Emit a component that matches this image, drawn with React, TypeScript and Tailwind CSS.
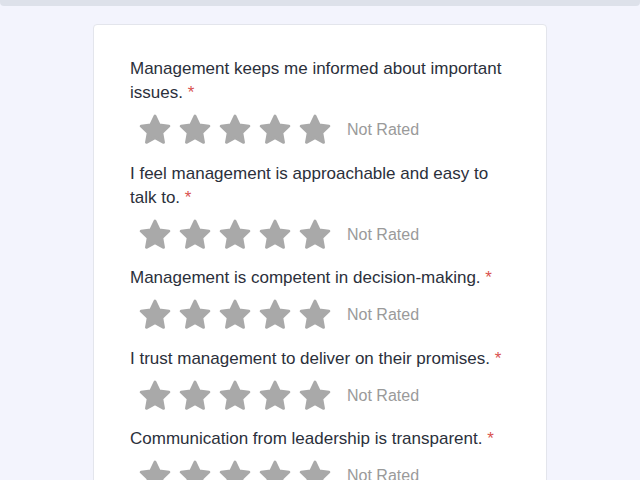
import React from "react";

interface Question {
  id:    string;
  label: string;
}

const QUESTIONS: Question[] = [
  { id: "informed",     label: "Management keeps me informed about important issues." },
  { id: "approachable", label: "I feel management is approachable and easy to talk to." },
  { id: "competent",    label: "Management is competent in decision-making." },
  { id: "trust",        label: "I trust management to deliver on their promises." },
  { id: "transparent",  label: "Communication from leadership is transparent." },
];

// Five-point star with softened corners
function Star() {
  return (
    <svg viewBox="0 0 24 24" className="w-9 h-9" aria-hidden>
      <path
        d="M12 2.6l2.85 5.9 6.45.9-4.7 4.5 1.15 6.4L12 17.2l-5.75 3.1 1.15-6.4-4.7-4.5 6.45-.9z"
        fill="#a9a9a9"
        stroke="#a9a9a9"
        strokeWidth="1.8"
        strokeLinejoin="round"
      />
    </svg>
  );
}

function RatingRow({ label }: { label: string }) {
  return (
    <div className="flex flex-col">
      <p className="text-[17px] leading-6 text-[#2b303b]">
        {label} <span className="text-[#d9534f]">*</span>
      </p>
      <div className="flex items-center mt-[7px] pl-[7px] h-9">
        <div className="flex gap-1">
          {[1, 2, 3, 4, 5].map((n) => (
            <button key={n} aria-label={`${n} star`} className="w-9 h-9 flex items-center justify-center">
              <Star />
            </button>
          ))}
        </div>
        <span className="ml-[14px] text-base text-[#9a9a9a]">Not Rated</span>
      </div>
    </div>
  );
}

export default function App() {
  return (
    <div
      className="min-h-screen bg-[#f3f4fd] overflow-hidden"
      style={{ fontFamily: '"Liberation Sans", Arial, sans-serif' }}
    >
      <div className="h-[6px] bg-[#dde1ea] rounded-b-[4px]" />
      <div className="flex justify-center pt-[18px]">
        <div className="w-[454px] bg-white border border-[#e3e5ec] rounded-[4px] pl-[36px] pr-[29px] pt-[32px] flex flex-col gap-[13.5px] min-h-[480px]">
          {QUESTIONS.map((q) => (
            <RatingRow key={q.id} label={q.label} />
          ))}
        </div>
      </div>
    </div>
  );
}
